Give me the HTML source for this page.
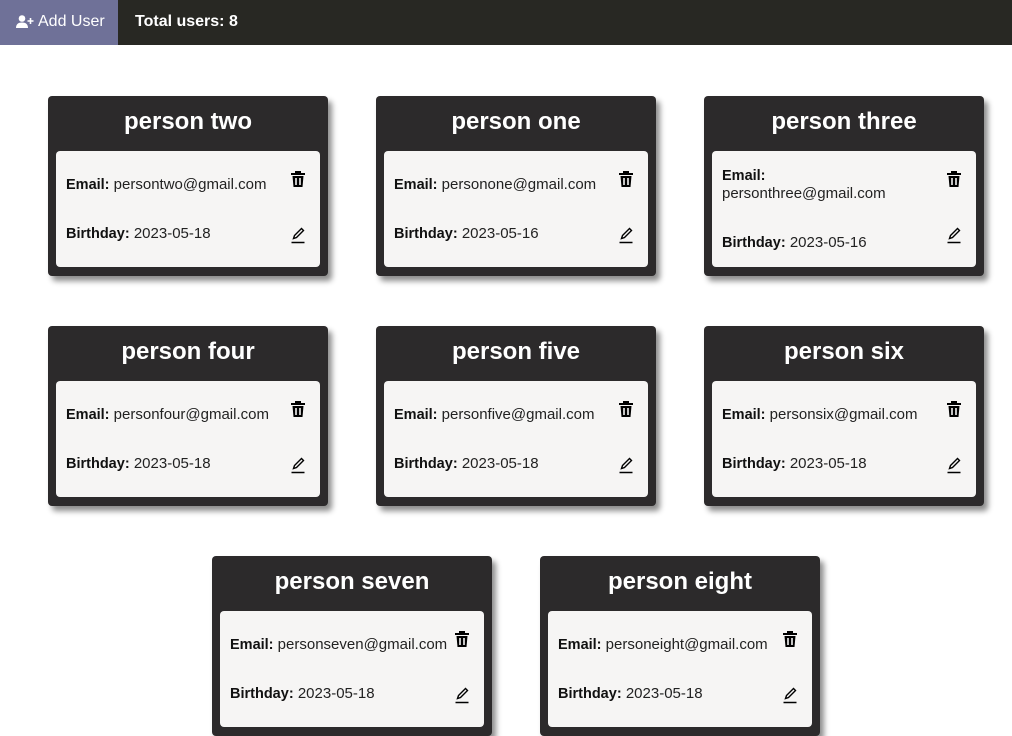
<!DOCTYPE html>
<html><head><meta charset="utf-8"><style>
*{margin:0;padding:0;box-sizing:border-box}
body{width:1012px;height:597px;overflow:hidden;background:#fff;font-family:"Liberation Sans",Arial,sans-serif;position:relative}
.nav{position:absolute;left:0;top:0;width:1012px;height:45px;background:#282823}
.btn{position:absolute;left:0;top:0;width:118px;height:45px;background:#6f7198;color:#fff;font-size:16px;line-height:43px;padding-left:16px}
.btn svg{vertical-align:-2px;margin-right:4px}
.tot{position:absolute;left:135px;top:0;line-height:43px;color:#fff;font-weight:bold;font-size:16px}
.card{position:absolute;width:280px;height:180px;background:#2c2a2b;border-radius:4px;box-shadow:4px 5px 6px rgba(0,0,0,.45)}
.card h2{position:absolute;left:0;right:0;top:11px;text-align:center;color:#fff;font-size:24px;line-height:30px}
.p{position:absolute;left:8px;top:55px;width:264px;height:116px;background:#f6f5f4;border-radius:4px;font-size:15px;color:#222}
.l{position:absolute;left:10px;line-height:17px}
.l b{color:#111;font-size:14.5px}
.ic{position:absolute;left:234px}
</style></head><body>
<div class="nav"><div class="btn"><svg width="18" height="13" viewBox="0 0 18 13"><circle cx="6" cy="3.5" r="3.3" fill="#fff"/><path d="M0 13c0-4 2.5-5.5 6-5.5s6 1.5 6 5.5z" fill="#fff"/><path d="M14.5 3v6M11.5 6h6" stroke="#fff" stroke-width="1.6"/></svg>Add User</div><div class="tot">Total users: 8</div></div>

<div id="c"></div>
<script>
const T='<svg class="ic" style="top:TOPpx" width="16" height="18" viewBox="0 0 16 18"><path d="M5 1h6v2h4v2H1V3h4z" fill="#000"/><path d="M2.5 6h11l-1 11h-9z" fill="#000"/><path d="M6 8v7M10 8v7" stroke="#f6f5f4" stroke-width="1.6"/></svg>';
const E='<svg class="ic" style="top:TOPpx" width="16" height="18" viewBox="0 0 16 18"><path d="M3.5 12.5l1-3 7-7 2 2-7 7z" fill="none" stroke="#000" stroke-width="1.4"/><path d="M1.5 16.5h13" stroke="#000" stroke-width="1.5"/></svg>';
const d=[["person two","persontwo","2023-05-18",48,96],["person one","personone","2023-05-16",376,96],["person three","personthree","2023-05-16",704,96,1],["person four","personfour","2023-05-18",48,326],["person five","personfive","2023-05-18",376,326],["person six","personsix","2023-05-18",704,326],["person seven","personseven","2023-05-18",212,556],["person eight","personeight","2023-05-18",540,556]];
let h='';
for(const c of d){
 let inner;
 if(c[5]) inner=`<div class="l" style="top:16px"><b>Email:</b><br>${c[1]}@gmail.com</div><div class="l" style="top:83px"><b>Birthday:</b> ${c[2]}</div>`+T.replace('TOP',19)+E.replace('TOP',75);
 else inner=`<div class="l" style="top:25px"><b>Email:</b> ${c[1]}@gmail.com</div><div class="l" style="top:74px"><b>Birthday:</b> ${c[2]}</div>`+T.replace('TOP',19)+E.replace('TOP',75);
 h+=`<div class="card" style="left:${c[3]}px;top:${c[4]}px"><h2>${c[0]}</h2><div class="p">${inner}</div></div>`;
}
document.getElementById('c').innerHTML=h;
</script>
</body></html>
